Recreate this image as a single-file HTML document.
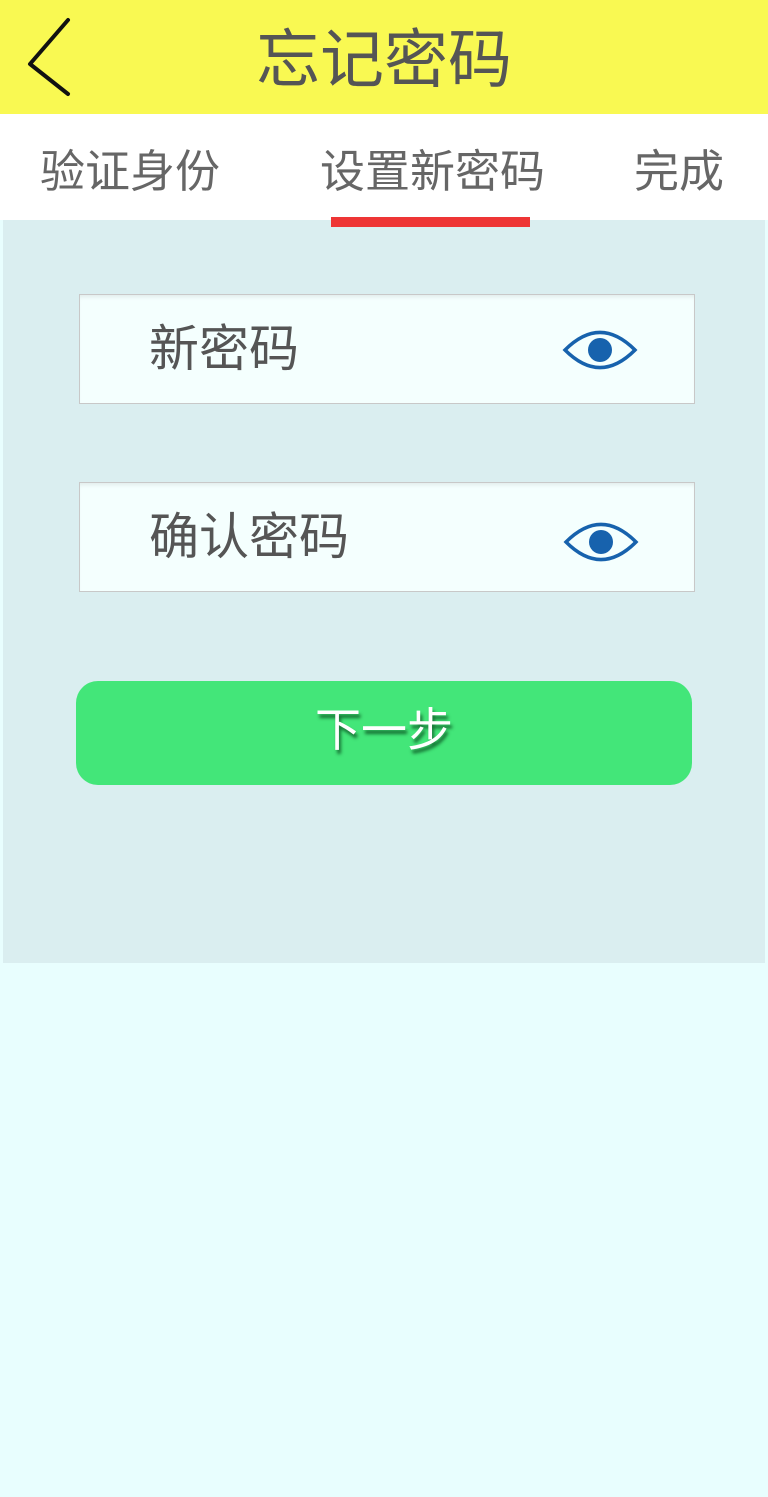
<!DOCTYPE html>
<html><head><meta charset="utf-8"><style>
body{margin:0;width:768px;height:1497px;background:#e8fefe;font-family:"Liberation Sans","Noto Sans CJK SC",sans-serif;position:relative;overflow:hidden}
.a{position:absolute}
.hdr{left:0;top:0;width:768px;height:114px;background:#f9f952}
.title{left:0;width:768px;top:20px;text-align:center;font-size:64px;line-height:80px;color:#555}
.tabs{left:0;top:114px;width:768px;height:106px;background:#fff}
.tab{font-size:45px;color:#666;line-height:60px;top:142px}
.panel{left:3px;top:220px;width:762px;height:743px;background:#daeef0}
.inp{left:79px;width:614px;height:108px;background:#f4fffe;border:1px solid #c8c8c8;box-shadow:inset 0 4px 4px -2px rgba(0,0,0,.08)}
.lbl{left:69px;font-size:50px;color:#555;line-height:60px;top:24px}
.btn{left:76px;top:681px;width:616px;height:104px;background:#43e679;border-radius:22px;text-align:center;color:#fff;font-size:46px;line-height:98px;text-shadow:2px 4px 3px rgba(0,60,20,.7)}
</style></head><body>
<div class="a hdr"></div>
<svg class="a" style="left:24px;top:14px" width="52" height="86"><path d="M44 6 L6 50 L44 80" fill="none" stroke="#111" stroke-width="4" stroke-linecap="round" stroke-linejoin="round"/></svg>
<div class="a title">忘记密码</div>
<div class="a tabs"></div>
<div class="a tab" style="left:40px">验证身份</div>
<div class="a tab" style="left:320px">设置新密码</div>
<div class="a tab" style="left:634px">完成</div>
<div class="a panel"></div>
<div class="a" style="left:331px;top:217px;width:199px;height:10px;background:#ee3535"></div>
<div class="a inp" style="top:294px"><div class="a lbl">新密码</div>
<svg class="a" style="left:482px;top:34px" width="76" height="42"><path d="M3 21 Q38 -14 73 21 Q38 56 3 21Z" fill="none" stroke="#1762ad" stroke-width="3.5"/><circle cx="38" cy="21" r="12" fill="#1762ad"/></svg></div>
<div class="a inp" style="top:482px"><div class="a lbl">确认密码</div>
<svg class="a" style="left:483px;top:38px" width="76" height="42"><path d="M3 21 Q38 -14 73 21 Q38 56 3 21Z" fill="none" stroke="#1762ad" stroke-width="3.5"/><circle cx="38" cy="21" r="12" fill="#1762ad"/></svg></div>
<div class="a btn">下一步</div>
</body></html>
